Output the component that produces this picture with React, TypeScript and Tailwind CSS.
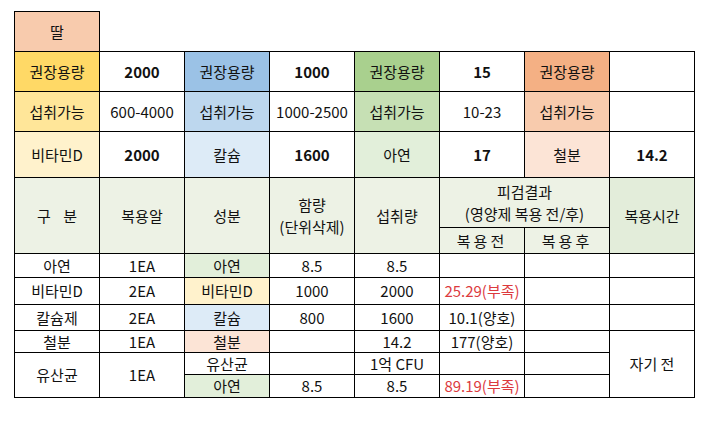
import React from "react";

type CellProps = {
  children?: React.ReactNode;
  className?: string;
};

// one spreadsheet cell: right + bottom border, the grid draws left + top
function Cell({ children, className = "" }: CellProps) {
  return (
    <div
      className={`flex items-center justify-center border-r border-b border-black text-center ${className}`}
    >
      {children}
    </div>
  );
}

export default function App() {
  return (
    <div className="w-[707px] h-[431px] bg-white pl-[14px] pt-[11px] font-['Noto_Sans_CJK_KR','Noto_Sans',sans-serif] text-[15px] leading-[22px] text-[#111]">
      {/* Title cell */}
      <div className="flex h-[40px] w-[86px] items-center justify-center border-l border-t border-r border-black bg-[#F8CBAD]">
        딸
      </div>

      <div className="grid w-[681px] grid-cols-[repeat(8,85px)] grid-rows-[40px_40px_46px_50px_26px_24px_27px_26px_22px_22px_23px] border-l border-t border-black">
        {/* Row 1 : 권장용량 */}
        <Cell className="bg-[#FFD966]">권장용량</Cell>
        <Cell className="font-bold">2000</Cell>
        <Cell className="bg-[#9BC2E6]">권장용량</Cell>
        <Cell className="font-bold">1000</Cell>
        <Cell className="bg-[#A9D08E]">권장용량</Cell>
        <Cell className="font-bold">15</Cell>
        <Cell className="bg-[#F4B084]">권장용량</Cell>
        <Cell />

        {/* Row 2 : 섭취가능 */}
        <Cell className="bg-[#FFE699]">섭취가능</Cell>
        <Cell>600-4000</Cell>
        <Cell className="bg-[#BDD7EE]">섭취가능</Cell>
        <Cell>1000-2500</Cell>
        <Cell className="bg-[#C6E0B4]">섭취가능</Cell>
        <Cell>10-23</Cell>
        <Cell className="bg-[#F8CBAD]">섭취가능</Cell>
        <Cell />

        {/* Row 3 : 섭취량 */}
        <Cell className="bg-[#FFF2CC]">비타민D</Cell>
        <Cell className="font-bold">2000</Cell>
        <Cell className="bg-[#DDEBF7]">칼슘</Cell>
        <Cell className="font-bold">1600</Cell>
        <Cell className="bg-[#E2EFDA]">아연</Cell>
        <Cell className="font-bold">17</Cell>
        <Cell className="bg-[#FCE4D6]">철분</Cell>
        <Cell className="font-bold">14.2</Cell>

        {/* Header */}
        <Cell className="col-start-1 row-start-4 row-span-2 bg-[#EDF2E5] [word-spacing:9px]">구 분</Cell>
        <Cell className="col-start-2 row-start-4 row-span-2 bg-[#EDF2E5]">복용알</Cell>
        <Cell className="col-start-3 row-start-4 row-span-2 bg-[#EDF2E5]">성분</Cell>
        <Cell className="col-start-4 row-start-4 row-span-2 bg-[#EDF2E5]">
          <span>
            함량
            <br />
            (단위삭제)
          </span>
        </Cell>
        <Cell className="col-start-5 row-start-4 row-span-2 bg-[#EDF2E5]">섭취량</Cell>
        <Cell className="col-start-6 col-span-2 row-start-4 bg-[#EDF2E5]">
          <span>
            피검결과
            <br />
            (영양제 복용 전/후)
          </span>
        </Cell>
        <Cell className="col-start-8 row-start-4 row-span-2 bg-[#E3EDDA]">복용시간</Cell>
        <Cell className="bg-[#EDF2E5] tracking-[3px]">복용전</Cell>
        <Cell className="bg-[#EDF2E5] tracking-[3px]">복용후</Cell>

        {/* 아연 */}
        <Cell>아연</Cell>
        <Cell>1EA</Cell>
        <Cell className="bg-[#E2EFDA]">아연</Cell>
        <Cell>8.5</Cell>
        <Cell>8.5</Cell>
        <Cell />
        <Cell />
        <Cell />

        {/* 비타민D */}
        <Cell>비타민D</Cell>
        <Cell>2EA</Cell>
        <Cell className="bg-[#FFF2CC]">비타민D</Cell>
        <Cell>1000</Cell>
        <Cell>2000</Cell>
        <Cell className="text-[#DC3A3E]">25.29(부족)</Cell>
        <Cell />
        <Cell />

        {/* 칼슘제 */}
        <Cell>칼슘제</Cell>
        <Cell>2EA</Cell>
        <Cell className="bg-[#DDEBF7]">칼슘</Cell>
        <Cell>800</Cell>
        <Cell>1600</Cell>
        <Cell>10.1(양호)</Cell>
        <Cell />
        <Cell />

        {/* 복용시간 merged */}
        <Cell className="col-start-8 row-start-9 row-span-3">자기 전</Cell>

        {/* 철분 */}
        <Cell>철분</Cell>
        <Cell>1EA</Cell>
        <Cell className="bg-[#FCE4D6]">철분</Cell>
        <Cell />
        <Cell>14.2</Cell>
        <Cell>177(양호)</Cell>
        <Cell />

        {/* 유산균 */}
        <Cell className="col-start-1 row-start-10 row-span-2">유산균</Cell>
        <Cell className="col-start-2 row-start-10 row-span-2">1EA</Cell>
        <Cell>유산균</Cell>
        <Cell />
        <Cell>1억 CFU</Cell>
        <Cell />
        <Cell />
        <Cell className="bg-[#E2EFDA]">아연</Cell>
        <Cell>8.5</Cell>
        <Cell>8.5</Cell>
        <Cell className="text-[#DC3A3E]">89.19(부족)</Cell>
        <Cell />
      </div>
    </div>
  );
}
